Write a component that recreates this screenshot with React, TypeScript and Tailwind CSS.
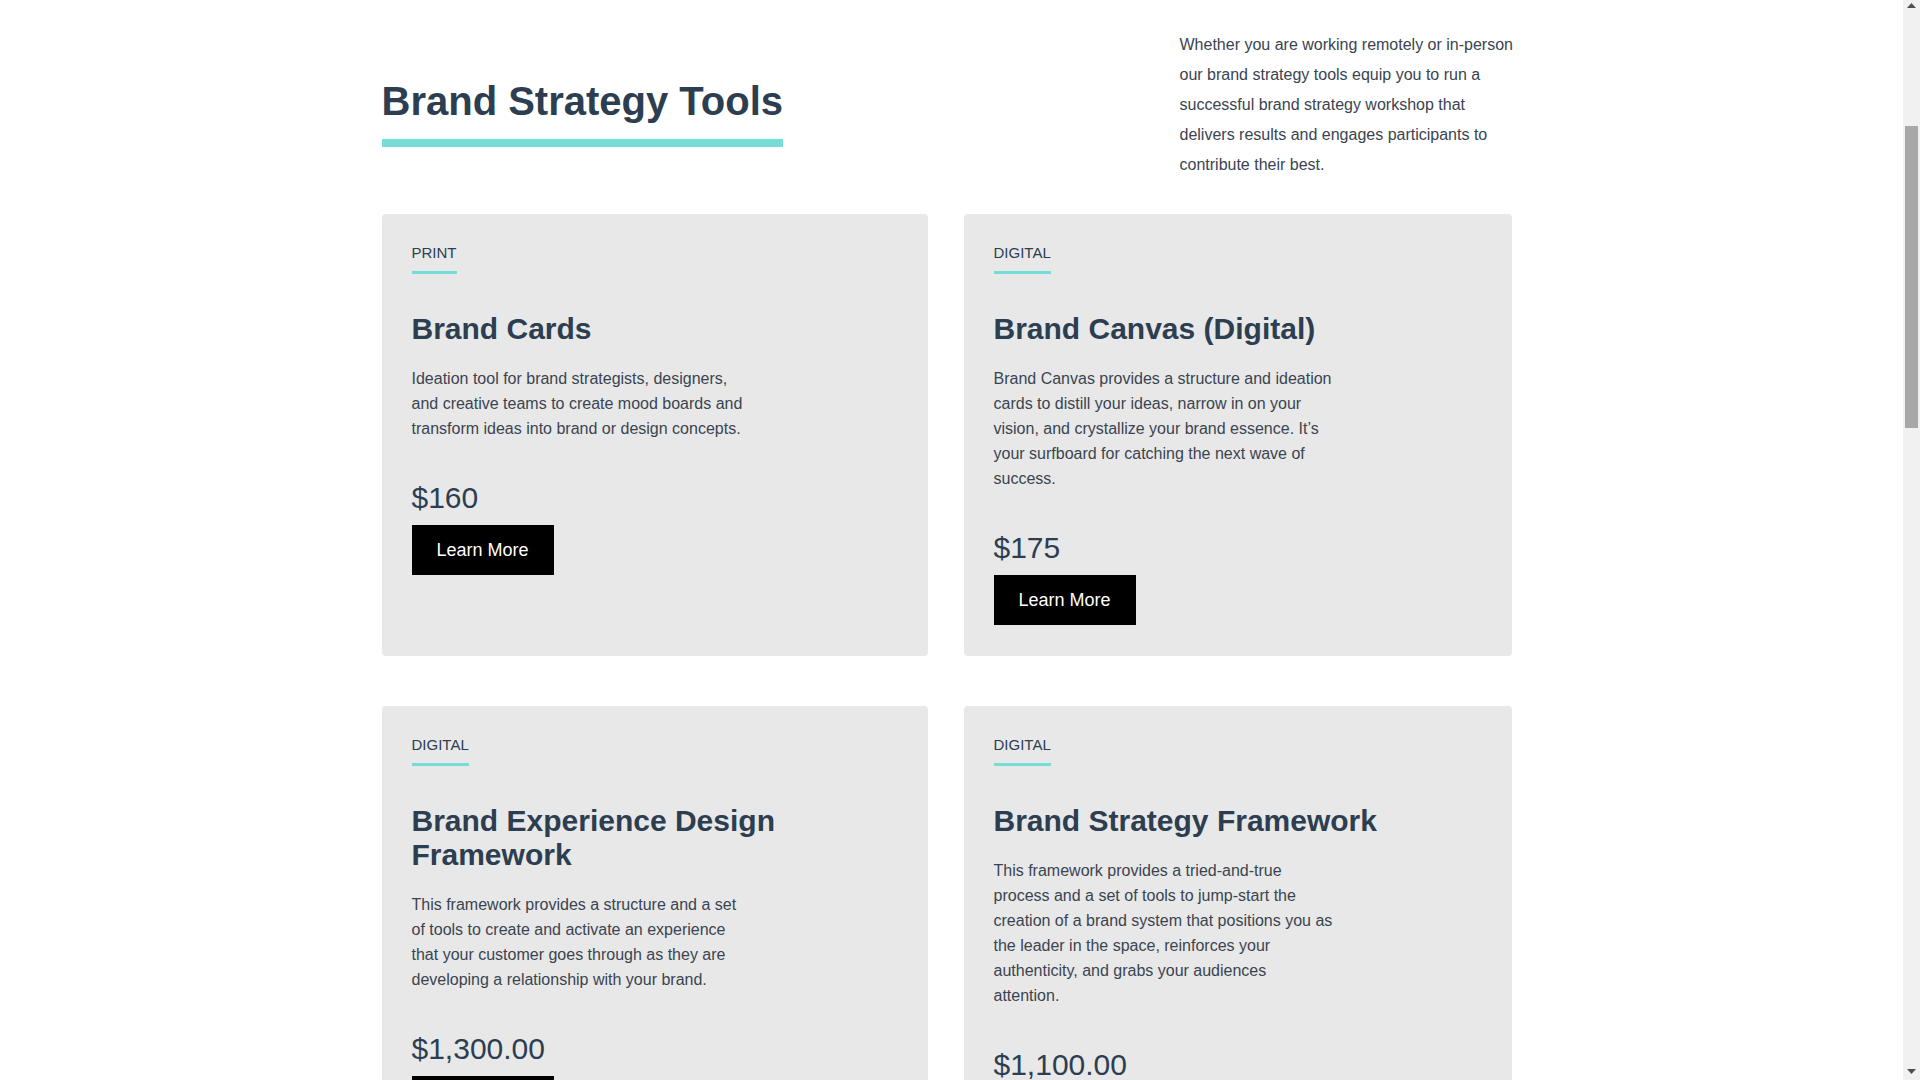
import * as React from 'react';

type Tool = {
  tag: string;
  title: string;
  description: string;
  price: string;
};

const tools: Tool[] = [
  {
    tag: 'PRINT',
    title: 'Brand Cards',
    description:
      'Ideation tool for brand strategists, designers, and creative teams to create mood boards and transform ideas into brand or design concepts.',
    price: '$160',
  },
  {
    tag: 'DIGITAL',
    title: 'Brand Canvas (Digital)',
    description:
      'Brand Canvas provides a structure and ideation cards to distill your ideas, narrow in on your vision, and crystallize your brand essence. It’s your surfboard for catching the next wave of success.',
    price: '$175',
  },
  {
    tag: 'DIGITAL',
    title: 'Brand Experience Design Framework',
    description:
      'This framework provides a structure and a set of tools to create and activate an experience that your customer goes through as they are developing a relationship with your brand.',
    price: '$1,300.00',
  },
  {
    tag: 'DIGITAL',
    title: 'Brand Strategy Framework',
    description:
      'This framework provides a tried-and-true process and a set of tools to jump-start the creation of a brand system that positions you as the leader in the space, reinforces your authenticity, and grabs your audiences attention.',
    price: '$1,100.00',
  },
];

function ToolCard({ tool }: { tool: Tool }) {
  return (
    <div className="rounded-[4px] bg-[#e8e8e8] px-[30px] pb-[31px] pt-[27px]">
      {/* Category tag */}
      <div>
        <span className="inline-block border-b-[3px] border-[#74ddd8] pb-[10px] text-[15px] leading-[17px] text-[#2c3e50]">
          {tool.tag}
        </span>
      </div>

      <h3 className="mt-[38px] max-w-[420px] text-[30px] font-bold leading-[34px] text-[#2c3e50]">
        {tool.title}
      </h3>

      <p className="mt-[20px] max-w-[340px] text-[16px] leading-[25px] text-[#3a4450]">
        {tool.description}
      </p>

      <div className="mt-[40px] text-[30px] leading-[34px] text-[#2c3e50]">{tool.price}</div>

      <button className="mt-[10px] flex h-[50px] items-center bg-black px-[25px] text-[18px] text-white">
        Learn More
      </button>
    </div>
  );
}

function Scrollbar() {
  return (
    <div className="flex h-full w-[17px] shrink-0 flex-col items-center bg-[#f1f1f1]">
      <svg width="9" height="5" viewBox="0 0 9 5" className="mt-[3px]">
        <path d="M0 5 L4.5 0 L9 5 Z" fill="#505050" />
      </svg>
      <div className="mt-[118px] h-[302px] w-[13px] bg-[#a8a8a8]" />
      <div className="flex-1" />
      <svg width="9" height="5" viewBox="0 0 9 5" className="mb-[6px]">
        <path d="M0 0 L9 0 L4.5 5 Z" fill="#505050" />
      </svg>
    </div>
  );
}

export default function App() {
  return (
    <div
      className="flex h-[1080px] w-full overflow-hidden bg-white"
      style={{ fontFamily: '"Liberation Sans", Arial, sans-serif' }}
    >
      <main className="min-w-0 flex-1">
        <div className="mx-auto w-[1140px] pt-[30px]">
          {/* Header row */}
          <div className="flex items-start justify-between">
            <h2 className="mt-[47px] inline-block border-b-8 border-[#74ddd8] pb-[14px] text-[40px] font-bold leading-[48px] text-[#2c3e50]">
              Brand Strategy Tools
            </h2>
            <p className="mr-[6px] w-[336px] text-[16px] leading-[30px] text-[#3a4450]">
              Whether you are working remotely or in-person our brand strategy tools equip you to run a
              successful brand strategy workshop that delivers results and engages participants to
              contribute their best.
            </p>
          </div>

          {/* Cards */}
          <div className="mt-[34px] grid grid-cols-[546px_548px] gap-x-[36px] gap-y-[50px]">
            {tools.map((tool) => (
              <ToolCard key={tool.title} tool={tool} />
            ))}
          </div>
        </div>
      </main>
      <Scrollbar />
    </div>
  );
}
